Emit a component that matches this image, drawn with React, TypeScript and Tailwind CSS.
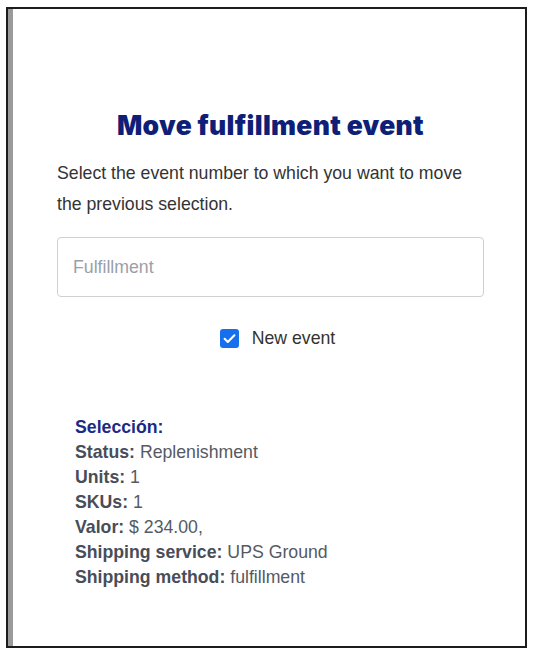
import React from "react";

const rows = [
  { label: "Status:", value: "Replenishment" },
  { label: "Units:", value: "1" },
  { label: "SKUs:", value: "1" },
  { label: "Valor:", value: "$ 234.00," },
  { label: "Shipping service:", value: "UPS Ground" },
  { label: "Shipping method:", value: "fulfillment" },
];

const App = () => {
  return (
    <div className="min-h-[661px] bg-white pt-[7px] pl-[6px] font-['Liberation_Sans',Arial,sans-serif]">
      <div className="w-[521px] h-[641px] border-2 border-[#1c1c1c] flex">
        <div className="w-[5px] bg-[#9b9b9b]" />
        <div className="flex-1 flex flex-col pl-[44px] pr-[41px] pt-[99px]">
          <h1 className="text-center text-[26.5px] leading-[34px] font-black tracking-[0.3px] text-[#0f1f78] font-['Inter',sans-serif]">
            Move fulfillment event
          </h1>
          <p className="mt-[16px] text-[17.7px] leading-[31px] text-[#333]">
            Select the event number to which you want to move the previous selection.
          </p>
          <div className="mt-[17px] h-[60px] border border-[#d0d0d0] rounded-[4px] flex items-center px-[15px]">
            <span className="text-[17.7px] text-[#9aa0a8]">Fulfillment</span>
          </div>
          <div className="mt-[29px] flex items-center justify-center gap-[13px] pl-[14px]">
            <div className="w-[19px] h-[19px] rounded-[3px] bg-[#1670ee] flex items-center justify-center">
              <svg width="15" height="15" viewBox="0 0 16 16" fill="none">
                <path d="M2.8 8.3l3.4 3.4L13.2 4.6" stroke="white" strokeWidth="2.2" strokeLinecap="round" strokeLinejoin="round" />
              </svg>
            </div>
            <span className="text-[17.7px] leading-[24px] text-[#333]">New event</span>
          </div>
          <div className="mt-[65px] ml-[18px] flex flex-col text-[17.7px] leading-[25px]">
            <span className="font-bold text-[#1b2b85]">Selección:</span>
            {rows.map((r) => (
              <div key={r.label} className="text-[#555a63]">
                <span className="font-bold text-[#484d58]">{r.label}</span> {r.value}
              </div>
            ))}
          </div>
        </div>
      </div>
    </div>
  );
};

export default App;
